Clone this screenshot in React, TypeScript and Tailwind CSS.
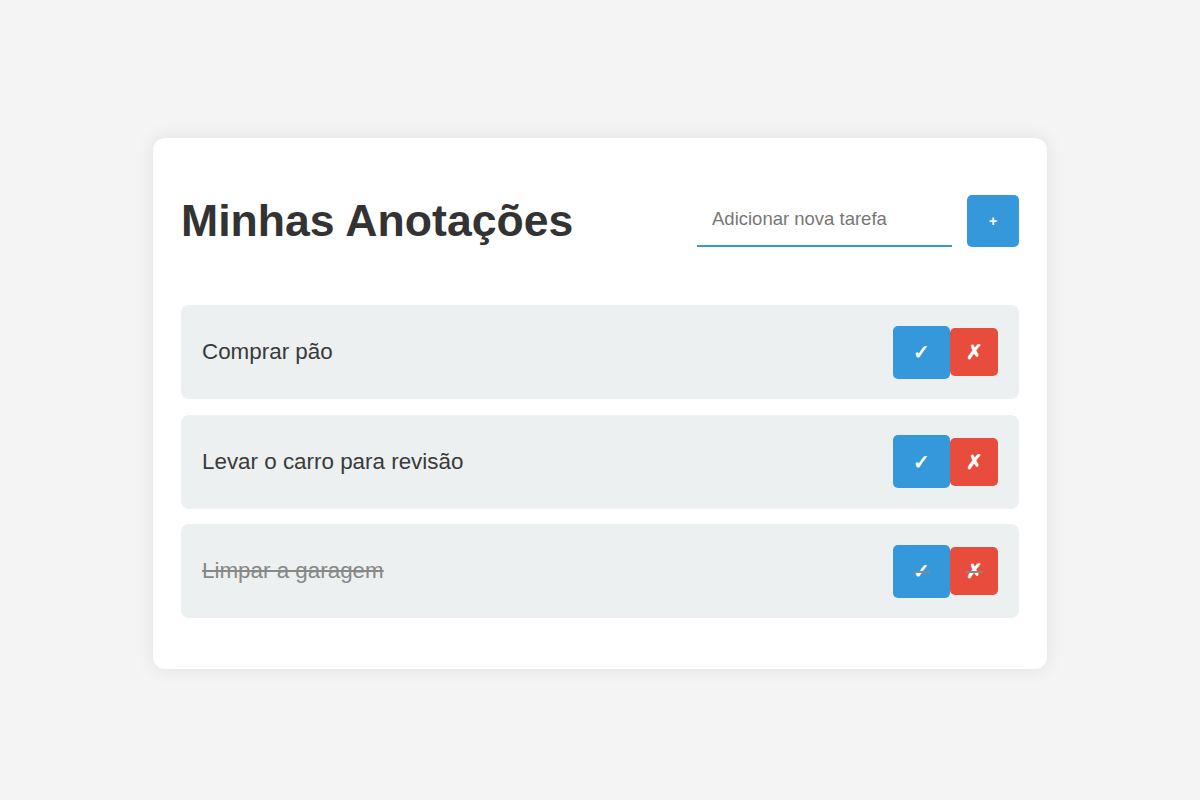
import { useState } from 'react'

type Task = { id: number; text: string; done: boolean }

const initial: Task[] = [
  { id: 1, text: 'Comprar pão', done: false },
  { id: 2, text: 'Levar o carro para revisão', done: false },
  { id: 3, text: 'Limpar a garagem', done: true },
]

export default function App() {
  const [tasks, setTasks] = useState<Task[]>(initial)
  const [draft, setDraft] = useState('')

  const add = () => {
    if (!draft.trim()) return
    setTasks(t => [...t, { id: Date.now(), text: draft.trim(), done: false }])
    setDraft('')
  }

  return (
    <div className="min-h-screen bg-[#f4f4f4] flex items-center justify-center pt-[7px] font-['Liberation_Sans',Arial,sans-serif]">
      <div className="w-[894px] bg-white rounded-[12px] shadow-[0_0_20px_rgba(0,0,0,0.08)] px-[28px] pt-[28px] pb-[51px]">
        <div className="h-[110px] flex items-center justify-between">
          <h1 className="text-[44.6px] font-bold text-[#333]">Minhas Anotações</h1>
          <div className="flex items-center gap-[15px]">
            <input
              value={draft}
              onChange={e => setDraft(e.target.value)}
              placeholder="Adicionar nova tarefa"
              className="w-[255px] h-[52px] px-[15px] pb-[3px] text-[18.5px] text-[#333] placeholder:text-[#777] border-b-2 border-[#3498db] outline-none"
            />
            <button onClick={add} className="w-[52px] h-[52px] rounded-[5px] bg-[#3498db] text-white text-[14px] font-bold">
              +
            </button>
          </div>
        </div>

        {/* task list */}
        <ul className="mt-[29px] flex flex-col gap-[15.5px]">
          {tasks.map(t => (
            <li
              key={t.id}
              className="h-[94px] bg-[#ecf0f1] rounded-[8px] px-[21px] flex items-center justify-between"
            >
              <span
                className={
                  t.done
                    ? 'text-[22.4px] text-[#888] line-through decoration-[#888]'
                    : 'text-[22.4px] text-[#3a3a3a]'
                }
              >
                {t.text}
              </span>
              <div className="flex items-center">
                <button
                  onClick={() => setTasks(ts => ts.map(x => (x.id === t.id ? { ...x, done: !x.done } : x)))}
                  className={`w-[57px] h-[53px] rounded-[5px] bg-[#3498db] text-white text-[20px] font-bold ${t.done ? 'line-through decoration-[#888]' : ''}`}
                >
                  ✓
                </button>
                <button
                  onClick={() => setTasks(ts => ts.filter(x => x.id !== t.id))}
                  className={`w-[48px] h-[48px] rounded-[5px] bg-[#e74c3c] text-white text-[20px] font-bold ${t.done ? 'line-through decoration-[#888]' : ''}`}
                >
                  ✗
                </button>
              </div>
            </li>
          ))}
        </ul>
      </div>
    </div>
  )
}
